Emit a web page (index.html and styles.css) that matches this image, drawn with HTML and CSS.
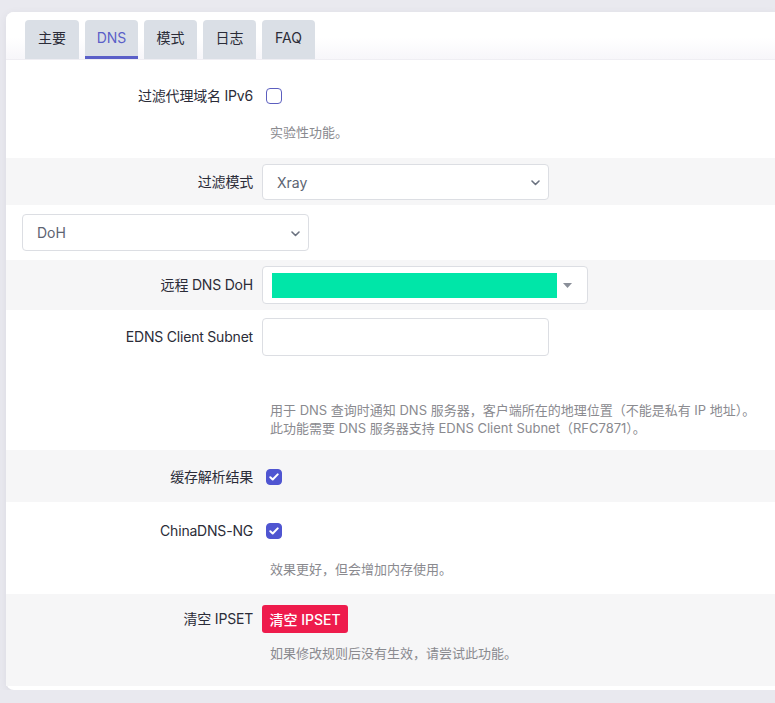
FILE: index.html
```html
<!DOCTYPE html>
<html lang="zh-CN">
<head>
    <meta charset="UTF-8">
    <meta name="viewport" content="width=device-width, initial-scale=1.0">
    <title>DNS</title>
    <link rel="stylesheet" href="styles.css">
</head>
<body>
    <div class="card">
        <div class="tabs">
            <div class="tab first">主要</div>
            <div class="tab active">DNS</div>
            <div class="tab">模式</div>
            <div class="tab">日志</div>
            <div class="tab">FAQ</div>
        </div>

        <div class="row row-ipv6">
            <label class="lbl">过滤代理域名 IPv6</label>
            <div class="field">
                <div class="line"><span class="check"></span></div>
                <p class="desc desc-ipv6">实验性功能。</p>
            </div>
        </div>

        <div class="row gray row-mode">
            <label class="lbl lbl-36">过滤模式</label>
            <div class="field">
                <div class="select-wrap">
                    <select class="select"><option>Xray</option></select>
                    <svg class="chev" width="9" height="6" viewBox="0 0 9 6"><path d="M1 1l3.5 3.5L8 1" fill="none" stroke="#6b7280" stroke-width="1.6" stroke-linecap="round" stroke-linejoin="round"/></svg>
                </div>
            </div>
        </div>

        <div class="row-full">
            <div class="select-wrap">
                <select class="select select-doh"><option>DoH</option></select>
                <svg class="chev" width="9" height="6" viewBox="0 0 9 6"><path d="M1 1l3.5 3.5L8 1" fill="none" stroke="#6b7280" stroke-width="1.6" stroke-linecap="round" stroke-linejoin="round"/></svg>
            </div>
        </div>

        <div class="row gray row-remote">
            <label class="lbl lbl-38">远程 DNS DoH</label>
            <div class="field">
                <div class="combo">
                    <div class="combo-value"></div>
                    <svg class="tri" width="9" height="5" viewBox="0 0 9 5"><path d="M0 0h9L4.5 5z" fill="#8a8f99"/></svg>
                </div>
            </div>
        </div>

        <div class="row row-edns">
            <label class="lbl lbl-38">EDNS Client Subnet</label>
            <div class="field">
                <input class="input" type="text">
                <p class="desc desc-edns">用于 DNS 查询时通知 DNS 服务器，客户端所在的地理位置（不能是私有 IP 地址）。<br>此功能需要 DNS 服务器支持 EDNS Client Subnet（RFC7871）。</p>
            </div>
        </div>

        <div class="row gray row-cache">
            <label class="lbl">缓存解析结果</label>
            <div class="field">
                <div class="line"><span class="check on"><svg width="10" height="8" viewBox="0 0 10 8"><path d="M1.3 4.2l2.4 2.3L8.7 1.4" fill="none" stroke="#fff" stroke-width="2" stroke-linecap="round" stroke-linejoin="round"/></svg></span></div>
            </div>
        </div>

        <div class="row row-china">
            <label class="lbl">ChinaDNS-NG</label>
            <div class="field">
                <div class="line"><span class="check on"><svg width="10" height="8" viewBox="0 0 10 8"><path d="M1.3 4.2l2.4 2.3L8.7 1.4" fill="none" stroke="#fff" stroke-width="2" stroke-linecap="round" stroke-linejoin="round"/></svg></span></div>
                <p class="desc desc-china">效果更好，但会增加内存使用。</p>
            </div>
        </div>

        <div class="row gray row-ipset">
            <label class="lbl lbl-28">清空 IPSET</label>
            <div class="field">
                <button class="btn-red">清空 IPSET</button>
                <p class="desc desc-ipset">如果修改规则后没有生效，请尝试此功能。</p>
            </div>
        </div>
    </div>
</body>
</html>
```

FILE: styles.css
```css
*{
    margin: 0;
    padding: 0;
    box-sizing: border-box;
}

body{
    background-color: #e9e9ef;
    font-family: Inter, "Noto Sans CJK SC", sans-serif;
    font-size: 14px;
    color: #2b2c38;
    padding: 12px 0 0 6px;
    overflow: hidden;
}

.card{
    background-color: #fff;
    border-radius: 8px 0 0 8px;
    box-shadow: 0 2px 8px rgba(60, 60, 90, .08);
    padding-bottom: 4px;
}

.tabs{
    display: flex;
    gap: 6px;
    padding: 8px 0 0 19px;
    height: 48px;
    background: linear-gradient(#fff 55%, #f7f6fa);
    border-bottom: 1px solid #efeef3;
    border-radius: 8px 0 0 0;
}

.tab{
    width: 53px;
    height: 39px;
    text-align: center;
    line-height: 36px;
    font-size: 14px;
    background-color: #dadfe6;
    color: #2b2c38;
    border-radius: 4px 4px 0 0;
}

.tab.first{
    width: 54px;
}

.tab.active{
    color: #5a5fc8;
    border-bottom: 3px solid #5a5fc8;
}

.row{
    display: grid;
    grid-template-columns: 247px 1fr;
    column-gap: 9px;
    align-items: start;
}

.gray{
    background-color: #f6f6f7;
}

.lbl{
    text-align: right;
    line-height: 20px;
    letter-spacing: -0.2px;
}

.lbl-36{ line-height: 36px; }
.lbl-38{ line-height: 38px; }
.lbl-28{ line-height: 28px; }

.line{
    height: 20px;
    display: flex;
    align-items: center;
    padding-left: 4px;
}

.check{
    width: 16px;
    height: 16px;
    border: 1.5px solid #5c5fbf;
    border-radius: 4px;
    display: flex;
    align-items: center;
    justify-content: center;
}

.check.on{
    background-color: #4f55d1;
    border-color: #4f55d1;
}

.desc{
    padding-left: 8px;
    font-size: 13px;
    line-height: 20px;
    color: #8a8a8f;
}

.row-ipv6{ padding: 26px 0 16px; }
.desc-ipv6{ margin-top: 16px; }

.row-mode{ padding: 6px 0 5px; }

.select-wrap{
    position: relative;
    width: 287px;
}

.select{
    appearance: none;
    width: 287px;
    height: 36px;
    padding: 0 14px;
    border: 1px solid #dcdee3;
    border-radius: 4px;
    background-color: #fff;
    font-family: Inter, "Noto Sans CJK SC", sans-serif;
    font-size: 14px;
    color: #5d6472;
}

.select-doh{ height: 37px; }

.chev{
    position: absolute;
    right: 9px;
    top: 50%;
    margin-top: -2px;
}

.row-full{
    padding: 9px 16px;
}

.row-remote{ padding: 6px 0; }

.combo{
    width: 326px;
    height: 38px;
    border: 1px solid #dcdee3;
    border-radius: 4px;
    background-color: #fff;
    display: flex;
    align-items: center;
    padding: 0 0 0 9px;
}

.combo-value{
    width: 285px;
    height: 25px;
    background-color: #00e6a8;
}

.tri{
    margin-left: 6px;
}

.row-edns{ padding: 8px 0 13px; }

.input{
    display: block;
    width: 287px;
    height: 38px;
    border: 1px solid #dcdee3;
    border-radius: 4px;
    background-color: #fff;
}

.desc-edns{
    margin-top: 45px;
    line-height: 18px;
}

.row-cache{ padding: 17px 0 15px; }

.row-china{ padding: 19px 0 15px; }
.desc-china{ margin-top: 18px; }

.row-ipset{ padding: 11px 0 23px; }

.btn-red{
    display: block;
    width: 86px;
    height: 28px;
    border: none;
    border-radius: 3px;
    background-color: #ee1b4c;
    color: #fff;
    font-family: Inter, "Noto Sans CJK SC", sans-serif;
    font-size: 14px;
    font-weight: 500;
}

.desc-ipset{ margin-top: 10px; }
```
